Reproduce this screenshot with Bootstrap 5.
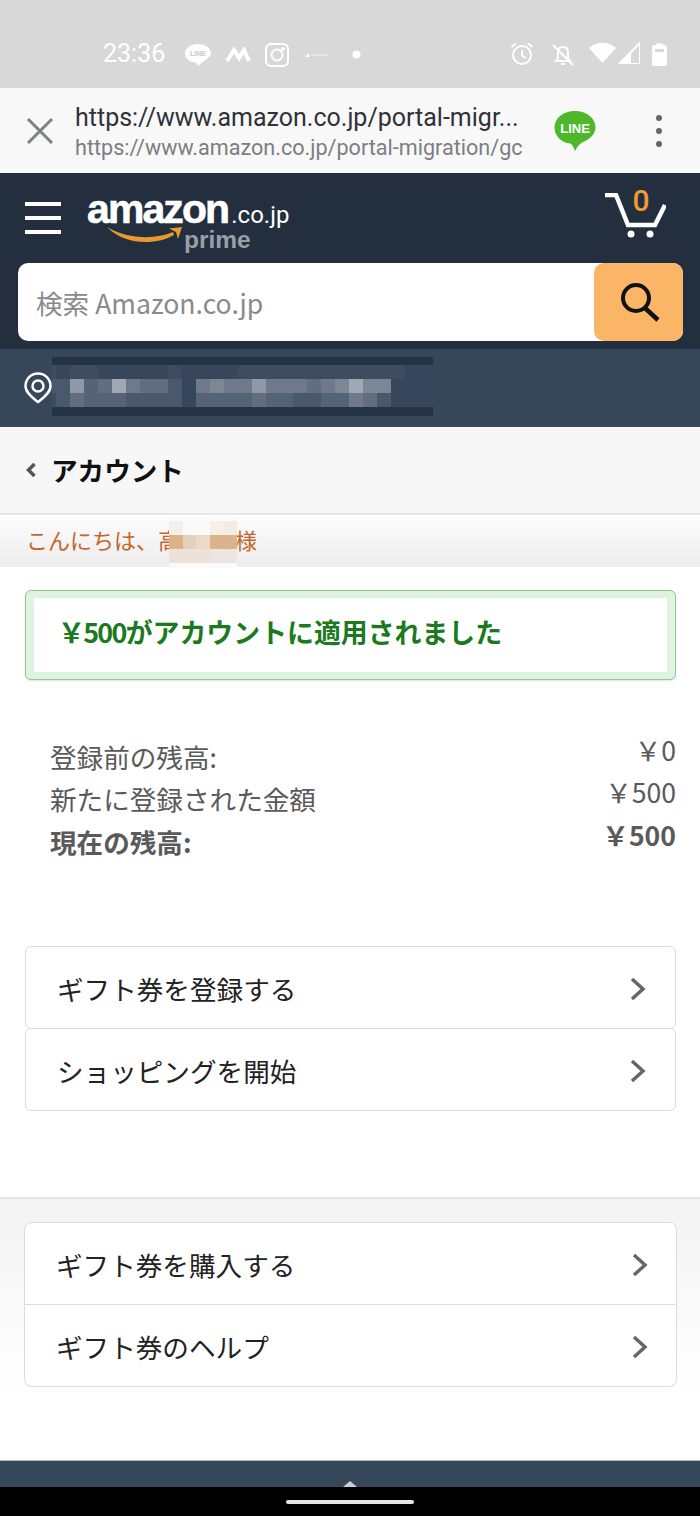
<!DOCTYPE html>
<html lang="ja">
<head>
    <meta charset="UTF-8">
    <title>アカウント | Amazon.co.jp</title>
    <link href="https://cdn.jsdelivr.net/npm/bootstrap@5.3.3/dist/css/bootstrap.min.css" rel="stylesheet">
    <style>
        html, body {
            width: 700px;
            height: 1516px;
            overflow: hidden;
        }

        body {
            background: #fff;
            font-family: "Noto Sans CJK JP", "Noto Sans", sans-serif;
            font-size: 26.6px;
            color: #111;
        }

        /* phone + browser chrome */
        .status-strip {
            height: 88px;
            background: #d8d8d8;
            padding: 30px 33px 0 103px;
            color: #fff;
        }

        .status-time {
            font-family: Roboto, sans-serif;
            font-size: 25px;
            line-height: 48px;
            width: 82px;
        }

        .ic-line { margin-top: 13px; }
        .ic-m { margin: 17px 0 0 14px; }
        .ic-insta { margin: 13px 0 0 14px; }
        .ic-tiny { margin: 21px 0 0 16px; }
        .ic-dot { margin: 20px 0 0 23px; }
        .ic-alarm { margin-top: 12px; }
        .ic-bell { margin: 13px 0 0 17px; }
        .ic-wifi { margin: 12px 0 0 14px; }
        .ic-signal { margin: 12px 0 0 2px; }
        .ic-batt { margin: 12px 0 0 12px; }

        .browser-strip {
            height: 85px;
            background: #f8f8f9;
            padding: 0 37px 0 25px;
        }

        .browser-urls {
            width: 479px;
            margin-left: 20px;
            font-family: Roboto, sans-serif;
        }

        .url-main {
            font-size: 25px;
            line-height: 34px;
            color: #2f3236;
            white-space: nowrap;
        }

        .url-sub {
            font-size: 21.6px;
            line-height: 26px;
            color: #7b7e82;
            white-space: nowrap;
        }

        /* amazon header */
        .site-head {
            background: #232f3e;
            height: 176px;
        }

        .head-top {
            height: 90px;
            padding: 0 34px 0 25px;
        }

        .brand-box {
            position: relative;
            margin-left: 26px;
            height: 70px;
            width: 210px;
            padding-top: 7px;
        }

        .brand-top {
            height: 40px;
            line-height: 38px;
        }

        .brand-main {
            font-family: "Liberation Sans", sans-serif;
            font-weight: 700;
            font-size: 41px;
            line-height: 38px;
            letter-spacing: -1.9px;
            color: #fff;
            -webkit-text-stroke: 0.6px #fff;
        }

        .brand-tld {
            font-family: Roboto, sans-serif;
            font-size: 24px;
            line-height: 24px;
            color: #fff;
            margin-left: 3px;
        }

        .brand-prime {
            font-family: "Liberation Sans", sans-serif;
            font-weight: 700;
            font-size: 24.500px;
            line-height: 20px;
            color: #9a9fa6;
            margin-left: 97px;
        }

        .brand-smile {
            position: absolute;
            left: 20px;
            top: 42px;
        }

        .cart-box {
            position: relative;
            width: 61px;
            height: 50px;
        }

        .cart-count {
            position: absolute;
            left: 26px;
            top: -6px;
            width: 20px;
            text-align: center;
            font-family: Roboto, sans-serif;
            font-weight: 500;
            font-size: 30px;
            line-height: 28px;
            color: #f09a35;
        }

        .search-wrap {
            width: auto;
            margin: 0 17px 0 18px;
            background: #fff;
            border-radius: 10px;
        }

        .search-input {
            height: 78px;
            padding: 0 18px;
            border: 0;
            background: transparent;
            font-size: 26.6px;
            border-radius: 10px !important;
        }

        .search-input::placeholder {
            color: #8a8a8a;
        }

        .search-btn {
            width: 89px;
            height: 78px;
            padding: 0;
            border: 0;
            background: #fbb566;
            border-radius: 10px !important;
        }

        .search-btn:hover {
            background: #fbb566;
        }

        .loc-strip {
            height: 78px;
            background: #37475a;
            padding-left: 24px;
        }

        .loc-blur {
            width: 381px;
            margin-bottom: 3px;
        }

        .tile-row {
            display: flex;
        }

        .tile-row > div {
            flex: 1 1 0;
        }

        /* first mosaic column is cut off by the edge of the blur */
        .loc-blur .tile-row > div:first-child {
            flex: 0 0 4px;
        }

        .back-strip {
            height: 86px;
            background: #f7f7f8;
            padding-left: 26px;
            font-weight: 700;
        }

        .back-strip span {
            margin-left: 15px;
        }

        .hello-strip {
            height: 54px;
            padding: 4px 0 0 26px;
            background: linear-gradient(#fdfdfd, #ececec);
            border-top: 2px solid #e6e6e6;
            font-size: 22px;
            line-height: 40px;
            color: #c4662c;
            position: relative;
        }

        .hello-name {
            display: inline-block;
            width: 55px;
        }

        .hello-blur {
            position: absolute;
            left: 169px;
            top: 2px;
            width: 68px;
        }

        /* main content */
        .main-area {
            height: 630px;
            padding: 23px 24px 0 25px;
        }

        .applied-box {
            border: 1px solid #8fc795;
            border-radius: 6px;
            background: #dff3e0;
            padding: 7px 8px;
            box-shadow: 0 1px 2px rgba(0, 0, 0, 0.12);
            height: 90px;
        }

        .applied-inner {
            height: 100%;
            padding: 0 0 6px 24px;
            font-size: 26.9px;
            font-weight: 700;
            color: #1c7a1e;
            background: #fff;
        }

        .yen-tight {
            letter-spacing: -1.7px;
        }

        .balance-block {
            margin-top: 49px;
            padding-left: 25px;
            color: #5a5a5a;
            height: 129px;
            margin-bottom: 88px;
        }

        .balance-row {
            height: 42.4px;
            line-height: 42.4px;
        }

        .balance-name {
            padding-top: 7px;
        }

        .action-item {
            height: 83px;
            padding: 3px 29px 0 31px;
            border-color: #dcdcdc;
            border-radius: 8px;
            color: #222;
        }

        .action-item + .action-item {
            margin-top: -1px;
            border-top-width: 1px;
        }

        .extra-area {
            height: 263px;
            padding: 23px 23px 0 24px;
            border-top: 2px solid #e4e4e4;
            background: linear-gradient(#f3f3f3, #fff 78%);
        }

        .extra-list {
            border-radius: 8px;
        }

        .extra-list .list-group-item {
            height: 82.5px;
            padding: 4px 28px 0 31px;
            border-color: #dcdcdc;
            color: #222;
        }

        .page-foot {
            height: 27px;
            background: #37475a;
            border-top: 1px solid #aeb4bb;
            padding-top: 20px;
        }

        .foot-arrow {
            width: 0;
            height: 0;
            margin-left: 343px;
            border-left: 7px solid transparent;
            border-right: 7px solid transparent;
            border-bottom: 6px solid #ccd0d5;
        }

        .gesture-strip {
            height: 29px;
            background: #000;
            padding-top: 13px;
        }

        .gesture-pill {
            width: 128px;
            height: 4px;
            border-radius: 2px;
            background: #e6e6e6;
        }
    </style>
</head>
<body>
    <!-- Android status bar -->
    <div class="status-strip d-flex justify-content-between">
        <div class="d-flex align-items-start">
            <div class="status-time">23:36</div>
            <svg class="ic-line" width="26" height="24" viewBox="0 0 26 24"><path d="M13 1C6 1 0 5 0 10.500C0 16 6 19 10 19.500C11 20 12 21 13 23C14 21 21 17 24 14C26 12 26 11 26 10.500C26 5 20 1 13 1Z" fill="#fff"/><text x="13" y="13" font-size="7" font-family="Liberation Sans" font-weight="700" fill="#c8c8c8" text-anchor="middle">LINE</text></svg>
            <svg class="ic-m" width="26" height="16" viewBox="0 0 26 16"><path d="M2 14L9 3L14 11L19 3L24 14" fill="none" stroke="#fff" stroke-width="4"/></svg>
            <svg class="ic-insta" width="24" height="24" viewBox="0 0 24 24" fill="none" stroke="#fff" stroke-width="2"><rect x="1" y="1" width="22" height="22" rx="5"/><circle cx="12" cy="12" r="5.500"/><circle cx="18" cy="6" r="1" fill="#fff"/></svg>
            <svg class="ic-tiny" width="24" height="8" viewBox="0 0 24 8"><path d="M0 6L4 2V6Z" fill="#fff"/><path d="M6 4H23" stroke="#e9e9e9" stroke-width="2" stroke-dasharray="3 1"/></svg>
            <svg class="ic-dot" width="9" height="9" viewBox="0 0 9 9"><circle cx="4.500" cy="4.500" r="4" fill="#fff"/></svg>
        </div>
        <div class="d-flex align-items-start">
            <svg class="ic-alarm" width="24" height="24" viewBox="0 0 24 24" fill="none" stroke="#fff" stroke-width="2"><circle cx="12" cy="13" r="9"/><path d="M12 8V13.500L15.500 16M1.500 5L6 1.500M22.500 5L18 1.500"/></svg>
            <svg class="ic-bell" width="24" height="24" viewBox="0 0 24 24" fill="none" stroke="#fff" stroke-width="2"><path d="M5 18H19L17 15V9C17 6 15 4 12 4C9 4 7 6 7 9V15ZM10 21H14M2 2L22 22"/></svg>
            <svg class="ic-wifi" width="27" height="22" viewBox="0 0 27 22"><path d="M0 6C8 -1 19 -1 27 6L13.500 21Z" fill="#fff"/></svg>
            <svg class="ic-signal" width="22" height="22" viewBox="0 0 22 22"><path d="M22 1V22H1Z" fill="none" stroke="#fff" stroke-width="2"/><path d="M13 10V22H1Z" fill="#fff"/></svg>
            <svg class="ic-batt" width="15" height="24" viewBox="0 0 15 24"><path d="M4 3V1.500H11V3H13C14 3 15 4 15 5V22C15 23 14 24 13 24H2C1 24 0 23 0 22V5C0 4 1 3 2 3Z" fill="#fff"/><rect x="3" y="7" width="9" height="3" fill="#d8d8d8"/></svg>
        </div>
    </div>

    <!-- custom tab toolbar -->
    <div class="browser-strip d-flex align-items-center">
        <svg width="30" height="30" viewBox="0 0 30 30"><path d="M3 3L27 27M27 3L3 27" stroke="#7d8186" stroke-width="3"/></svg>
        <div class="browser-urls">
            <div class="url-main">https://www.amazon.co.jp/portal-migr...</div>
            <div class="url-sub">https://www.amazon.co.jp/portal-migration/gc</div>
        </div>
        <svg width="42" height="42" viewBox="0 0 42 42"><path d="M21 1C9.500 1 0.500 8 0.500 17.500C0.500 27 9 33 16 33.500C18 34 19 36 21 41C23 37 25 34 29 32C36 29 41.500 24 41.500 17.500C41.500 8 32.500 1 21 1Z" fill="#4cb82a"/><text x="21" y="23" font-size="13" font-family="Liberation Sans" font-weight="700" fill="#fff" text-anchor="middle">LINE</text></svg>
        <svg class="ms-auto" width="8" height="34" viewBox="0 0 8 34"><circle cx="4" cy="4" r="3" fill="#666"/><circle cx="4" cy="17" r="3" fill="#666"/><circle cx="4" cy="30" r="3" fill="#666"/></svg>
    </div>

    <!-- amazon header -->
    <div class="site-head">
        <div class="head-top d-flex align-items-center">
            <svg width="36" height="34" viewBox="0 0 36 34"><path d="M0 3H36M0 17H36M0 31H36" stroke="#fff" stroke-width="4"/></svg>
            <div class="brand-box">
                <div class="brand-top d-flex align-items-baseline"><span class="brand-main">amazon</span><span class="brand-tld">.co.jp</span></div>
                <div class="brand-prime">prime</div>
                <svg class="brand-smile" width="78" height="24" viewBox="0 0 78 24"><path d="M0 2C20 14 48 15 66 7L67 10C50 20 18 21 0 2Z" fill="#e99a2c"/><path d="M62 3.500L75 2L71 14L69 7Z" fill="#e99a2c"/></svg>
            </div>
            <div class="cart-box ms-auto">
                <svg width="61" height="50" viewBox="0 0 61 50"><path d="M0 2H11L23 32H50L60 12" fill="none" stroke="#fff" stroke-width="4.500"/><circle cx="26" cy="41" r="3.500" fill="#fff"/><circle cx="45" cy="41" r="3.500" fill="#fff"/></svg>
                <div class="cart-count">0</div>
            </div>
        </div>
        <div class="search-wrap input-group">
            <input class="form-control search-input" type="text" placeholder="検索 Amazon.co.jp">
            <button class="btn search-btn" type="button">
                <svg width="44" height="44" viewBox="0 0 44 44"><circle cx="19" cy="18" r="13" fill="none" stroke="#111" stroke-width="4"/><path d="M28 28L41 40" stroke="#111" stroke-width="4.500"/></svg>
            </button>
        </div>
    </div>

    <!-- deliver to -->
    <div class="loc-strip d-flex align-items-center">
        <svg width="28" height="32" viewBox="0 0 28 32" fill="none" stroke="#fff" stroke-width="2.500"><path d="M14 30C9 26 1.500 21 1.500 14C1.500 7 7 1.500 14 1.500C21 1.500 26.500 7 26.500 14C26.500 21 19 26 14 30Z"/><circle cx="14" cy="14" r="5.500"/></svg>
        <div class="loc-blur" id="locBlur"></div>
    </div>

    <!-- back link -->
    <div class="back-strip d-flex align-items-center">
        <svg width="10" height="16" viewBox="0 0 10 16"><path d="M8.500 2L2.500 8L8.500 14" fill="none" stroke="#555" stroke-width="3.500"/></svg>
        <span>アカウント</span>
    </div>

    <div class="hello-strip">
        こんにちは、高<span class="hello-name"></span>様
        <div class="hello-blur" id="helloBlur"></div>
    </div>

    <div class="main-area">
        <div class="applied-box">
            <div class="applied-inner d-flex align-items-center"><span class="yen-tight">￥500</span>がアカウントに適用されました</div>
        </div>

        <div class="balance-block">
            <div class="balance-row d-flex justify-content-between"><span class="balance-name">登録前の残高:</span><span>￥0</span></div>
            <div class="balance-row d-flex justify-content-between"><span class="balance-name">新たに登録された金額</span><span>￥500</span></div>
            <div class="balance-row d-flex justify-content-between fw-bold"><span class="balance-name">現在の残高:</span><span>￥500</span></div>
        </div>

        <div class="list-group">
            <a href="#" class="list-group-item action-item rounded d-flex align-items-center justify-content-between">ギフト券を登録する
                <svg width="16" height="24" viewBox="0 0 16 24"><path d="M2 2L13 12L2 22" fill="none" stroke="#666" stroke-width="3.500"/></svg>
            </a>
            <a href="#" class="list-group-item action-item rounded d-flex align-items-center justify-content-between">ショッピングを開始
                <svg width="16" height="24" viewBox="0 0 16 24"><path d="M2 2L13 12L2 22" fill="none" stroke="#666" stroke-width="3.500"/></svg>
            </a>
        </div>
    </div>

    <div class="extra-area">
        <div class="list-group extra-list">
            <a href="#" class="list-group-item d-flex align-items-center justify-content-between">ギフト券を購入する
                <svg width="16" height="24" viewBox="0 0 16 24"><path d="M2 2L13 12L2 22" fill="none" stroke="#666" stroke-width="3.500"/></svg>
            </a>
            <a href="#" class="list-group-item d-flex align-items-center justify-content-between">ギフト券のヘルプ
                <svg width="16" height="24" viewBox="0 0 16 24"><path d="M2 2L13 12L2 22" fill="none" stroke="#666" stroke-width="3.500"/></svg>
            </a>
        </div>
    </div>

    <div class="page-foot"><div class="foot-arrow"></div></div>
    <div class="gesture-strip"><div class="gesture-pill mx-auto"></div></div>

    <script src="https://cdn.jsdelivr.net/npm/bootstrap@5.3.3/dist/js/bootstrap.bundle.min.js"></script>
    <script>
        // Mosaic over the address and the name
        function drawTiles(id, rows) {
            const box = document.getElementById(id);
            rows.forEach(row => {
                const line = document.createElement('div');
                line.className = 'tile-row';
                line.style.height = row.h + 'px';
                row.c.forEach(color => {
                    const tile = document.createElement('div');
                    tile.style.background = color;
                    line.appendChild(tile);
                });
                box.appendChild(line);
            });
        }

        const shades = ['#263347', '#37465a', '#3e4c60', '#4a586b', '#566376', '#626e80', '#6e7a8a', '#7c8795', '#8f98a5', '#a0a8b4'];
        const fromDigits = s => s.split('').map(d => shades[d]);

        drawTiles('locBlur', [
            { h: 8, c: fromDigits('0000000000000000000000000000') },
            { h: 14, c: fromDigits('2122111112111122222222222211') },
            { h: 14, c: fromDigits('3384596553167668666567977111') },
            { h: 14, c: fromDigits('2354443333144445443344653111') },
            { h: 9, c: fromDigits('0000000000000000000000000000') }
        ]);

        drawTiles('helloBlur', [
            { h: 4, c: ['#fbfbfb', '#fbfbfb', '#fbfbfb', '#fbfbfb', '#fbfbfb'] },
            { h: 14, c: ['#f5efe9', '#fafafa', '#fafafa', '#f6f0ea', '#f3ece4'] },
            { h: 14, c: ['#ddb28a', '#e7d0ba', '#ecd9c8', '#dcb28b', '#ddb38d'] },
            { h: 14, c: ['#ece2d9', '#ece2d9', '#ece2d9', '#ebe6e1', '#ebe6e1'] },
            { h: 5, c: ['#fafafa', '#fafafa', '#fafafa', '#fafafa', '#fafafa'] }
        ]);
    </script>
</body>
</html>
